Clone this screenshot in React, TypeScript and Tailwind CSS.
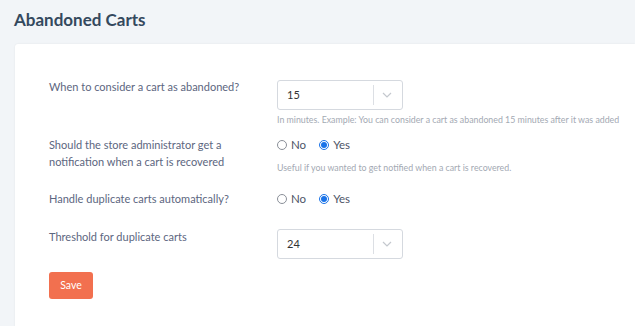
import React from 'react';

function SelectBox({ value }: { value: string }) {
  return (
    <div className="flex h-[30px] w-[126px] items-center rounded-[3px] border border-[#d5d9df] bg-white pl-[9px] pr-[10px]">
      <span className="flex-1 text-[11px] text-[#333]">{value}</span>
      <span className="mr-[8px] h-[20px] w-px bg-[#dcdfe4]" />
      <svg width="10" height="6" viewBox="0 0 10 6" fill="none">
        <path d="M1 1l4 4 4-4" stroke="#c4c8ce" strokeWidth="1.2" />
      </svg>
    </div>
  );
}

function Radio({ checked, label }: { checked?: boolean; label: string }) {
  return (
    <span className="flex items-center gap-[4px]">
      {checked ? (
        <span className="flex h-[10px] w-[10px] items-center justify-center rounded-full border border-[#1a73e8] bg-white">
          <span className="h-[6px] w-[6px] rounded-full bg-[#1a73e8]" />
        </span>
      ) : (
        <span className="h-[10px] w-[10px] rounded-full border border-[#8a8f98] bg-white" />
      )}
      <span className="text-[11.5px] text-[#4d5567]">{label}</span>
    </span>
  );
}

function YesNo() {
  return (
    <div className="flex h-[17px] items-center gap-[13px]">
      <Radio label="No" />
      <Radio checked label="Yes" />
    </div>
  );
}

export default function App() {
  return (
    <div
      className="min-h-[326px] bg-[#f2f5f8] pl-[15px]"
      style={{ fontFamily: 'Lato, "Liberation Sans", sans-serif' }}
    >
      <h1 className="-ml-[1px] pt-[8px] text-[17px] font-bold leading-[24px] text-[#34495e]">
        Abandoned Carts
      </h1>

      <div className="mt-[12px] rounded-tl-[3px] bg-white pb-[40px] pl-[34px] pt-[34px] shadow-[0_0_2px_rgba(0,0,0,0.08)]">
        {/* When to consider */}
        <div className="flex">
          <label className="w-[228px] shrink-0 text-[11px] leading-[17px] text-[#5c6680]">
            When to consider a cart as abandoned?
          </label>
          <div className="pt-[2px]">
            <SelectBox value="15" />
            <p className="mt-[4px] whitespace-nowrap text-[8.8px] leading-[12px] text-[#a3a9b3]">
              In minutes. Example: You can consider a cart as abandoned 15 minutes after it was added
            </p>
          </div>
        </div>

        {/* Admin notification */}
        <div className="mt-[10px] flex">
          <label className="w-[228px] shrink-0 pr-[40px] text-[11px] leading-[17px] text-[#5c6680]">
            Should the store administrator get a notification when a cart is recovered
          </label>
          <div>
            <YesNo />
            <p className="mt-[9px] whitespace-nowrap text-[8.8px] leading-[12px] text-[#a3a9b3]">
              Useful if you wanted to get notified when a cart is recovered.
            </p>
          </div>
        </div>

        {/* Duplicate carts */}
        <div className="mt-[16px] flex">
          <label className="w-[228px] shrink-0 text-[11px] leading-[17px] text-[#5c6680]">
            Handle duplicate carts automatically?
          </label>
          <YesNo />
        </div>

        {/* Threshold */}
        <div className="mt-[21px] flex">
          <label className="w-[228px] shrink-0 text-[11px] leading-[17px] text-[#5c6680]">
            Threshold for duplicate carts
          </label>
          <div className="pt-[1px]">
            <SelectBox value="24" />
          </div>
        </div>

        <button className="mt-[13px] h-[27px] w-[44px] rounded-[3px] bg-[#f2704f] text-[10.5px] text-white">
          Save
        </button>
      </div>
    </div>
  );
}
